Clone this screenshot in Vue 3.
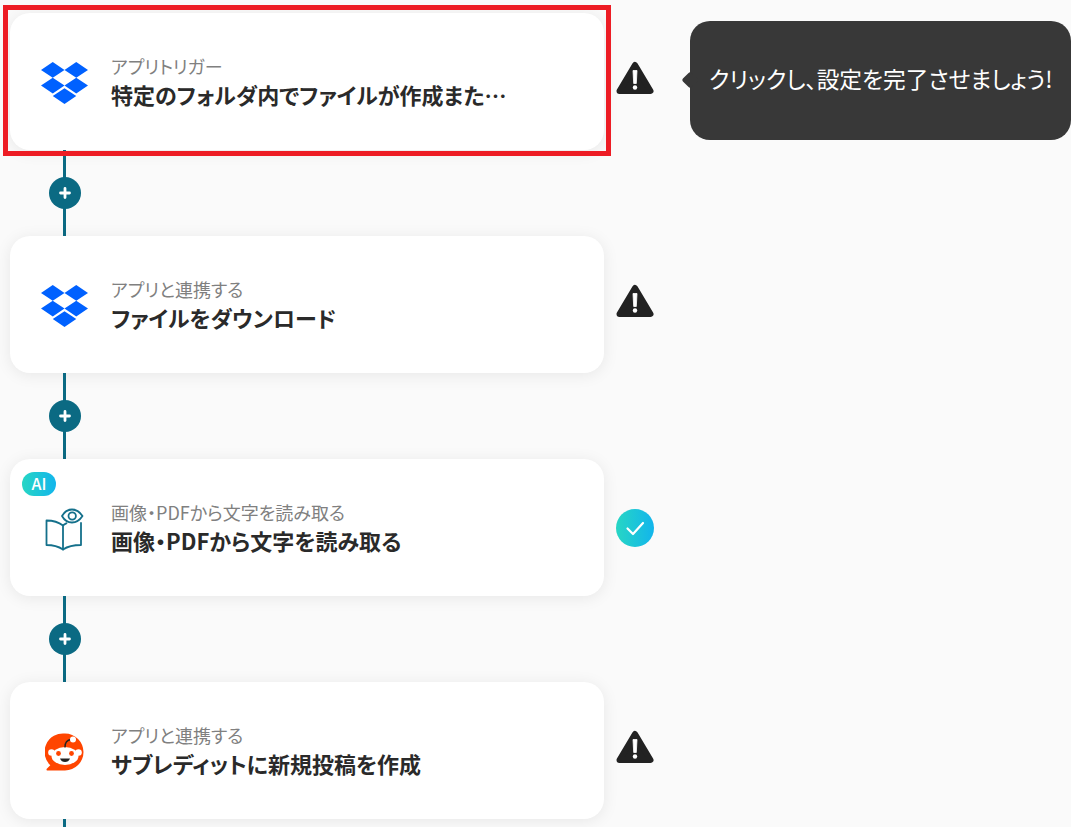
<template>
  <div class="page">
    <template v-for="(step, i) in steps" :key="i">
      <div class="row">
        <div class="card">
          <span v-if="step.icon === 'book'" class="ai-badge">AI</span>
          <div class="card-icon">
            <svg v-if="step.icon === 'dropbox'" width="47" height="42" viewBox="0 1.8 24 20.4" preserveAspectRatio="none">
              <path fill="#0061ff" d="M6 1.807L0 5.629l6 3.822 6.001-3.822L6 1.807zM18 1.807l-6 3.822 6 3.822 6-3.822-6-3.822zM0 13.274l6 3.822 6.001-3.822L6 9.452l-6 3.822zM18 9.452l-6 3.822 6 3.822 6-3.822-6-3.822zM6 18.371l6.001 3.822 6-3.822-6-3.822L6 18.371z" />
            </svg>
            <svg v-else-if="step.icon === 'book'" width="39" height="43" viewBox="0 0 39 43" fill="none" stroke="#14708b" stroke-width="1.8" stroke-linejoin="round" stroke-linecap="round">
              <path d="M1.500 12.500c6 0 12 1.500 16.500 5v24c-4.500-3-10.500-4.500-16.500-4.500z" />
              <path d="M18 17.500c1-1 2-1.500 3.500-2.300M36 15v22c-6.500 0-13.500 1.500-18 4.500" />
              <path d="M17 8c2.500-4.500 6-6.500 10-6.500S34.500 3.500 37.500 8c-3 4.500-6.500 6.500-10.500 6.500S19.500 12.500 17 8z" />
              <circle cx="27.200" cy="8" r="3.700" />
            </svg>
            <svg v-else width="39" height="39" viewBox="0 0 39 39">
              <path fill="#ff4500" d="M20 0.500a18.500 18.500 0 1 1 0 37H2.500a1 1 0 0 1-.7-1.700l3.500-3.500A18.500 18.500 0 0 1 20 0.500z" />
              <ellipse cx="6.500" cy="19.500" rx="3.300" ry="3.300" fill="#fff" />
              <ellipse cx="33.500" cy="19.500" rx="3.300" ry="3.300" fill="#fff" />
              <ellipse cx="20" cy="23" rx="13.500" ry="9" fill="#fff" />
              <path d="M20 14c0-4 1.500-7 6-7.500" fill="none" stroke="#222" stroke-width="1.400" stroke-linecap="round" />
              <circle cx="28" cy="6.500" r="3" fill="#fff" />
              <circle cx="13.500" cy="20.500" r="2.400" fill="#ff4500" />
              <circle cx="26.500" cy="20.500" r="2.400" fill="#ff4500" />
              <path d="M15 25.500h10c-.8 2.400-2.800 3.600-5 3.600s-4.200-1.200-5-3.600z" fill="#222" />
            </svg>
          </div>
          <div class="card-text">
            <div class="card-label">{{ step.label }}</div>
            <div class="card-title">{{ step.title }}</div>
          </div>
        </div>
        <svg v-if="step.done" class="status" width="38" height="38" viewBox="0 0 38 38">
          <defs>
            <linearGradient id="doneGrad" x1="0" y1="0" x2="1" y2="0">
              <stop offset="0" stop-color="#27d6c4" />
              <stop offset="1" stop-color="#12b5ec" />
            </linearGradient>
          </defs>
          <circle cx="19" cy="19" r="19" fill="url(#doneGrad)" />
          <path d="M11.500 19.500l5.500 5.500 10-11" fill="none" stroke="#fff" stroke-width="2.200" stroke-linecap="round" stroke-linejoin="round" />
        </svg>
        <svg v-else class="status warn" width="38" height="34" viewBox="0 0 38 34">
          <path d="M19 4L34.500 30H3.500z" fill="#222" stroke="#222" stroke-width="6" stroke-linejoin="round" />
          <path d="M17 9.500h4l-.7 13h-2.600z" fill="#fff" stroke="#fff" stroke-width=".8" stroke-linejoin="round" />
          <circle cx="19" cy="26.500" r="2.200" fill="#fff" />
        </svg>
      </div>
      <div class="connector">
        <button class="add-btn">
          <svg width="12" height="12" viewBox="0 0 12 12">
            <path d="M6 1.500v9M1.500 6h9" stroke="#fff" stroke-width="2.800" stroke-linecap="round" />
          </svg>
        </button>
      </div>
    </template>

    <div class="highlight"></div>
    <div class="tooltip">クリックし、設定を完了させましょう!</div>
  </div>
</template>

<script setup>
const steps = [
  { icon: "dropbox", label: "アプリトリガー", title: "特定のフォルダ内でファイルが作成また…" },
  { icon: "dropbox", label: "アプリと連携する", title: "ファイルをダウンロード" },
  { icon: "book", label: "画像・PDFから文字を読み取る", title: "画像・PDFから文字を読み取る", done: true },
  { icon: "reddit", label: "アプリと連携する", title: "サブレディットに新規投稿を作成" },
];
</script>

<style>
html,
body {
  margin: 0;
  overflow: hidden;
  background: #fafafa;
}
</style>

<style scoped>
.page {
  position: relative;
  height: 827px;
  overflow: hidden;
  padding: 13px 0 0 10px;
  box-sizing: border-box;
  background: #fafafa;
  font-family: "Noto Sans CJK JP", "Noto Sans", sans-serif;
  color: #222;
}

.row {
  display: flex;
  align-items: center;
  gap: 12px;
}

.card {
  position: relative;
  display: flex;
  align-items: center;
  width: 594px;
  height: 137px;
  padding-left: 30px;
  box-sizing: border-box;
  background: #fff;
  border-radius: 20px;
  box-shadow: 0 2px 16px rgba(0, 0, 0, 0.08);
}

.card-icon {
  display: flex;
  justify-content: center;
  width: 49px;
  margin-right: 22px;
  padding-top: 3px;
}

.card-text {
  width: 420px;
}

.card-label {
  font-size: 18px;
  line-height: 24px;
  color: #808080;
  font-feature-settings: "palt";
}

.card-title {
  font-size: 22px;
  line-height: 32px;
  font-weight: 700;
  color: #2a2a2a;
  white-space: nowrap;
  font-feature-settings: "palt";
}

.ai-badge {
  position: absolute;
  left: 12px;
  top: 13px;
  width: 34px;
  height: 24px;
  border-radius: 12px;
  background: linear-gradient(90deg, #27d6c4, #12b5ec);
  color: #fff;
  font-size: 16px;
  font-weight: 500;
  line-height: 23px;
  text-align: center;
}

.status {
  flex: none;
}

.status.warn {
  margin-bottom: 8px;
}

.connector {
  position: relative;
  display: flex;
  align-items: center;
  justify-content: center;
  width: 3px;
  height: 86px;
  margin-left: 53px;
  background: #0b6a83;
}

.add-btn {
  flex: none;
  display: flex;
  align-items: center;
  justify-content: center;
  width: 32px;
  height: 32px;
  padding: 0;
  border: none;
  border-radius: 50%;
  background: #0b6a83;
}

.highlight {
  position: absolute;
  left: 3px;
  top: 5px;
  width: 608px;
  height: 151px;
  box-sizing: border-box;
  border: 5px solid #ed1c24;
}

.tooltip {
  position: absolute;
  left: 690px;
  top: 21px;
  width: 381px;
  height: 119px;
  padding: 0 0 4px 19px;
  box-sizing: border-box;
  display: flex;
  align-items: center;
  white-space: nowrap;
  border-radius: 20px;
  background: #383838;
  color: #fff;
  font-size: 22.7px;
  font-feature-settings: "palt";
}

.tooltip::before {
  content: "";
  position: absolute;
  left: -6px;
  top: 53px;
  width: 12px;
  height: 12px;
  background: #383838;
  transform: rotate(45deg);
  border-radius: 2px;
}
</style>
